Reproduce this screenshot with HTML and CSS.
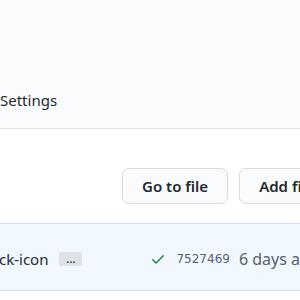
FILE: index.html
```html
<!DOCTYPE html>
<html>
<head>
<meta charset="utf-8">
<link rel="stylesheet" href="styles.css">
</head>
<body>
<header class="repo-head">
  <nav class="tabs">
    <span class="tab">Settings</span>
  </nav>
</header>
<main class="content">
  <div class="file-nav">
    <button class="btn">Go to file</button>
    <button class="btn">Add file</button>
  </div>
  <div class="commit-box">
    <span class="commit-msg">ck-icon</span>
    <span class="ellipsis">…</span>
    <span class="commit-meta">
      <svg class="check" width="16" height="16" viewBox="0 0 16 16"><path fill="#22863a" d="M13.78 4.22a.75.75 0 010 1.06l-7.25 7.25a.75.75 0 01-1.06 0L2.22 9.28a.75.75 0 011.06-1.06L6 10.940l6.72-6.72a.75.75 0 011.06 0z"/></svg>
      <span class="sha">7527469</span>
      <span class="age">6 days ago</span>
    </span>
  </div>
</main>
</body>
</html>
```
FILE: styles.css
```css
html, body {
  margin: 0;
  padding: 0;
  background: #fff;
  overflow: hidden;
  font-family: "Noto Sans", "Open Sans", sans-serif;
  color: #24292e;
}
.repo-head {
  height: 128px;
  background: #fafbfc;
  border-bottom: 1px solid #e1e4e8;
  display: flex;
  align-items: flex-end;
}
.tabs {
  display: flex;
  height: 56px;
  align-items: flex-start;
}
.tab {
  font-size: 15px;
  line-height: 20px;
  padding-top: 18px;
  color: #24292e;
}
.content {
  padding-top: 39px;
}
.file-nav {
  display: flex;
  gap: 11px;
  padding-left: 122px;
  white-space: nowrap;
}
.btn {
  font-family: inherit;
  font-size: 15px;
  font-weight: 600;
  color: #24292e;
  background: #fafbfc;
  border: 1px solid #d9dcdf;
  border-radius: 7px;
  height: 36px;
  padding: 0 19px;
  flex-shrink: 0;
}
.commit-box {
  margin-top: 19px;
  height: 62px;
  background: #f1f8ff;
  border-top: 1px solid #d3e2f1;
  border-bottom: 1px solid #d3e2f1;
  display: flex;
  align-items: center;
  white-space: nowrap;
  padding-top: 4px;
  box-sizing: content-box;
}
.commit-box > * {
  flex-shrink: 0;
}
.commit-msg {
  font-size: 15px;
  margin-left: -1px;
  color: #24292e;
}
.ellipsis {
  display: inline-flex;
  align-items: center;
  justify-content: center;
  margin-left: 11px;
  width: 23px;
  height: 14px;
  background: #dfe2e5;
  border-radius: 2px;
  font-size: 11px;
  font-weight: 700;
  line-height: 10px;
  color: #444d56;
}
.commit-meta {
  display: flex;
  align-items: center;
  margin-left: 68px;
}
.check {
  margin-right: 10px;
}
.sha {
  font-family: "DejaVu Sans", sans-serif;
  font-size: 12px;
  color: #586069;
  margin-right: 9px;
}
.age {
  font-size: 16px;
  color: #586069;
}
```
